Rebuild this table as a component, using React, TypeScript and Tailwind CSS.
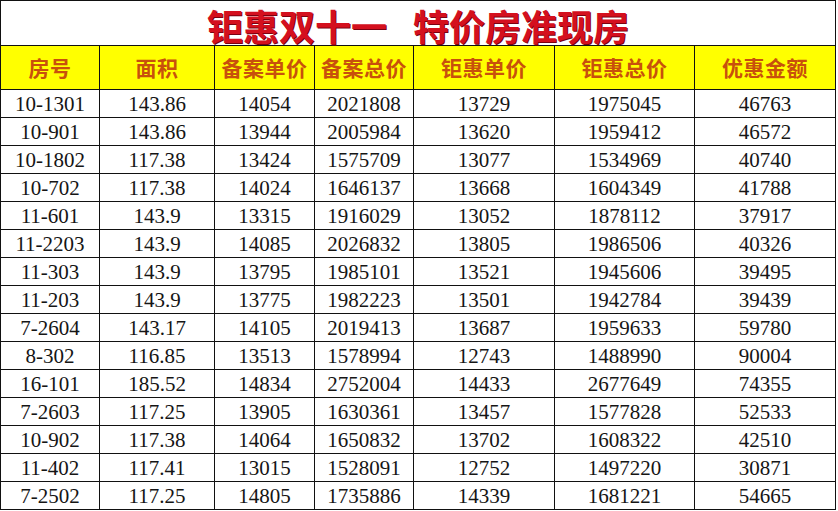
import React from "react";

const headers = ["房号", "面积", "备案单价", "备案总价", "钜惠单价", "钜惠总价", "优惠金额"];

const rows: string[][] = [
  ["10-1301", "143.86", "14054", "2021808", "13729", "1975045", "46763"],
  ["10-901", "143.86", "13944", "2005984", "13620", "1959412", "46572"],
  ["10-1802", "117.38", "13424", "1575709", "13077", "1534969", "40740"],
  ["10-702", "117.38", "14024", "1646137", "13668", "1604349", "41788"],
  ["11-601", "143.9", "13315", "1916029", "13052", "1878112", "37917"],
  ["11-2203", "143.9", "14085", "2026832", "13805", "1986506", "40326"],
  ["11-303", "143.9", "13795", "1985101", "13521", "1945606", "39495"],
  ["11-203", "143.9", "13775", "1982223", "13501", "1942784", "39439"],
  ["7-2604", "143.17", "14105", "2019413", "13687", "1959633", "59780"],
  ["8-302", "116.85", "13513", "1578994", "12743", "1488990", "90004"],
  ["16-101", "185.52", "14834", "2752004", "14433", "2677649", "74355"],
  ["7-2603", "117.25", "13905", "1630361", "13457", "1577828", "52533"],
  ["10-902", "117.38", "14064", "1650832", "13702", "1608322", "42510"],
  ["11-402", "117.41", "13015", "1528091", "12752", "1497220", "30871"],
  ["7-2502", "117.25", "14805", "1735886", "14339", "1681221", "54665"],
];

const grid =
  "grid grid-cols-[99px_115px_100px_99px_141px_140px_141px]";

export default function App() {
  return (
    <div className="w-[838px] h-[511px] bg-white overflow-hidden">
      <div className="w-[836px] border-l border-t border-[#111]">
        <div
          className="h-[45px] border-r border-b border-[#111] flex items-center justify-center pt-[4px] text-[36px] font-bold leading-none text-[#d4101e]"
          style={{
            fontFamily: '"Noto Sans CJK SC", sans-serif',
            textShadow: "1px 1px 0 #7a0010",
          }}
        >
          <span>钜惠双十一</span>
          <span className="inline-block w-[26px]" />
          <span>特价房准现房</span>
        </div>
        <div className={grid}>
          {headers.map((h) => (
            <div
              key={h}
              className="h-[44px] bg-[#ffff00] border-r border-b border-[#111] flex items-center justify-center text-[21px] font-bold tracking-[0.5px] text-[#c8500c]"
              style={{ fontFamily: '"Noto Sans CJK SC", sans-serif' }}
            >
              {h}
            </div>
          ))}
          {rows.map((r, i) =>
            r.map((c, j) => (
              <div
                key={`${i}-${j}`}
                className="h-[28px] border-r border-b border-[#111] flex items-center justify-center text-[21px] leading-none text-[#151515] pt-[2px]"
                style={{ fontFamily: '"Liberation Serif", serif' }}
              >
                {c}
              </div>
            ))
          )}
        </div>
      </div>
    </div>
  );
}
